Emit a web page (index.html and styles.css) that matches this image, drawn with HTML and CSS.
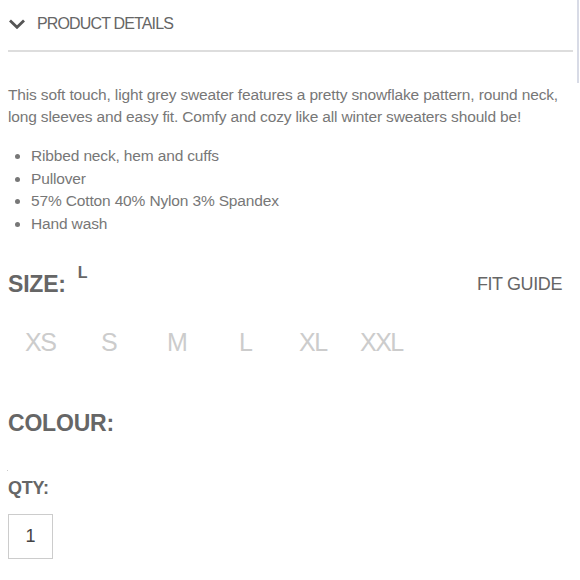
FILE: index.html
```html
<!DOCTYPE html>
<html>
<head>
<meta charset="utf-8">
<link rel="stylesheet" href="styles.css">
</head>
<body>
<div class="page">
  <div class="accordion-head">
    <svg class="chevron" width="16" height="10" viewBox="0 0 16 10"><path d="M1 1.5 L8 8.3 L15 1.5" fill="none" stroke="#555" stroke-width="2.8"/></svg>
    <span class="accordion-title">PRODUCT DETAILS</span>
  </div>
  <div class="divider"></div>
  <p class="desc">This soft touch, light grey sweater features a pretty snowflake pattern, round neck, long sleeves and easy fit. Comfy and cozy like all winter sweaters should be!</p>
  <ul class="features">
    <li>Ribbed neck, hem and cuffs</li>
    <li>Pullover</li>
    <li>57% Cotton 40% Nylon 3% Spandex</li>
    <li>Hand wash</li>
  </ul>
  <div class="size-head">
    <div class="label-group"><span class="label">SIZE:</span><span class="chosen">L</span></div>
    <span class="fit-guide">FIT GUIDE</span>
  </div>
  <div class="sizes">
    <span class="size">XS</span>
    <span class="size">S</span>
    <span class="size">M</span>
    <span class="size">L</span>
    <span class="size">XL</span>
    <span class="size">XXL</span>
  </div>
  <div class="label colour">COLOUR:</div>
  <div class="dot"></div>
  <div class="label qty-label">QTY:</div>
  <div class="qty">1</div>
</div>
<div class="scrollbar"></div>
</body>
</html>
```
FILE: styles.css
```css
html, body {
  margin: 0;
  padding: 0;
  background: #fff;
}
body {
  font-family: "Liberation Sans", Arial, sans-serif;
  color: #777;
}
.page {
  padding: 0 7px 0 8px;
}
.accordion-head {
  height: 48px;
  display: flex;
  align-items: center;
  padding-left: 1px;
}
.chevron {
  margin-right: 12px;
  margin-top: -1px;
}
.accordion-title {
  font-size: 16px;
  color: #666;
  letter-spacing: -0.85px;
  margin-top: -1px;
}
.divider {
  height: 2px;
  background: #ddd;
  margin-top: 2px;
}
.desc {
  margin: 32px 0 0;
  font-size: 15.5px;
  line-height: 22px;
  letter-spacing: -0.15px;
  color: #777;
}
.features {
  margin: 17px 0 0;
  padding-left: 23px;
  font-size: 15.5px;
  line-height: 22.5px;
  letter-spacing: -0.15px;
}
.size-head {
  margin-top: 36px;
  display: flex;
  justify-content: space-between;
  align-items: center;
  padding-right: 11px;
}
.label-group {
  display: flex;
  align-items: flex-start;
}
.label {
  font-weight: bold;
  font-size: 23px;
  color: #666;
  letter-spacing: -0.2px;
}
.chosen {
  font-size: 16px;
  font-weight: bold;
  color: #666;
  margin-left: 12px;
  margin-top: -7px;
}
.fit-guide {
  font-size: 18px;
  color: #666;
  letter-spacing: -0.4px;
}
.sizes {
  display: flex;
  margin-top: 30px;
  padding-left: 17px;
}
.size {
  font-size: 25px;
  color: #ccc;
  letter-spacing: -1.5px;
}
.size:nth-child(1) { width: 76px; }
.size:nth-child(2) { width: 66px; }
.size:nth-child(3) { width: 72px; }
.size:nth-child(4) { width: 60px; }
.size:nth-child(5) { width: 61px; }
.colour {
  margin-top: 53px;
}
.dot {
  width: 1px;
  height: 1px;
  background: #ccc;
  margin: 33px 0 0 -1px;
}
.qty-label {
  font-size: 18px;
  margin-top: 7px;
}
.qty {
  width: 43px;
  height: 43px;
  border: 1px solid #ccc;
  margin-top: 15px;
  display: flex;
  align-items: center;
  justify-content: center;
  font-size: 18px;
  color: #444;
}
.scrollbar {
  position: absolute;
  top: 0;
  right: 1px;
  width: 2px;
  height: 83px;
  background: #d8dbe6;
}
```
